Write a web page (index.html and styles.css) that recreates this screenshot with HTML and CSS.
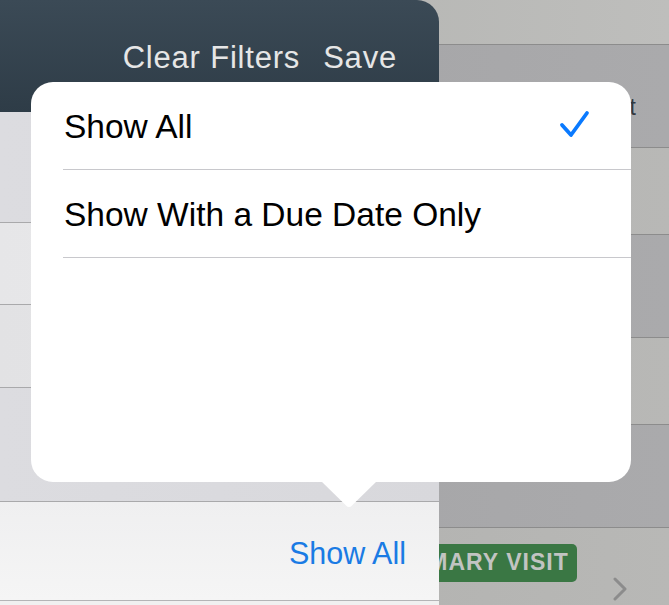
FILE: index.html
```html
<!DOCTYPE html>
<html lang="en">
<head>
    <meta charset="UTF-8">
    <meta name="viewport" content="width=device-width, initial-scale=1.0">
    <title>Filters</title>
    <link rel="stylesheet" href="styles.css">
</head>
<body>
    <div class="screen">
        <div class="bg-row bg-row-top"></div>
        <div class="bg-row bg-row-dark bg-row-sort"><span class="sort-label">Sort</span></div>
        <div class="bg-row bg-row-light r3"></div>
        <div class="bg-row bg-row-dark r4"></div>
        <div class="bg-row bg-row-light r5"></div>
        <div class="bg-row bg-row-dark r6"></div>
        <div class="bg-row bg-row-light bg-row-visit">
            <span class="badge">PRIMARY VISIT</span>
            <span class="chevron">
                <svg width="16" height="24" viewBox="0 0 16 24"><path d="M3 2 L13 12 L3 22" fill="none" stroke="#8c8c8c" stroke-width="3" stroke-linecap="round" stroke-linejoin="round"/></svg>
            </span>
        </div>
    </div>

    <div class="filter-panel">
        <header class="panel-header">
            <span class="header-btn">Clear Filters</span>
            <span class="header-btn">Save</span>
        </header>
        <div class="panel-row row-a"></div>
        <div class="panel-row row-b"></div>
        <div class="panel-row row-c"></div>
        <div class="panel-row row-d"></div>
        <div class="panel-toolbar">
            <span class="toolbar-value">Show All</span>
        </div>
        <div class="panel-rest"></div>
    </div>

    <div class="popover">
        <div class="option">
            <span>Show All</span>
            <svg class="check" width="32" height="30" viewBox="0 0 32 30"><path d="M3 15 L12 25 L28 3" fill="none" stroke="#0a7aff" stroke-width="3.8" stroke-linecap="round" stroke-linejoin="round"/></svg>
        </div>
        <div class="option">
            <span>Show With a Due Date Only</span>
        </div>
        <svg class="arrow" width="56" height="27" viewBox="0 0 56 27"><path d="M0 0 L56 0 L31 24.5 Q28 27.5 25 24.5 Z" fill="#fff"/></svg>
    </div>
</body>
</html>
```

FILE: styles.css
```css
body {
    margin: 0;
    padding: 0;
    font-family: 'Liberation Sans', Arial, sans-serif;
    background: #b5b5b3;
    width: 669px;
    height: 605px;
    overflow: hidden;
    position: relative;
}

/* dimmed screen behind the panel */
.screen {
    display: flex;
    flex-direction: column;
}

.bg-row {
    border-bottom: 1px solid #8c8c8c;
    display: flex;
    align-items: flex-start;
    justify-content: flex-end;
}

.bg-row-top {
    height: 44px;
    background: linear-gradient(to right, #aeafac, #bebebc);
}

.bg-row-dark {
    background: linear-gradient(to right, #a2a2a4, #aaaaac);
}

.bg-row-light {
    background: linear-gradient(to right, #adadab, #b8b8b6);
}

.bg-row-sort { height: 102px; }
.r3 { height: 86px; }
.r4 { height: 102px; }
.r5 { height: 86px; }
.r6 { height: 102px; }

.sort-label {
    font-size: 23px;
    color: #33383f;
    margin-top: 49px;
    margin-right: 33px;
}

.bg-row-visit {
    height: 80px;
    border-bottom: none;
    justify-content: flex-start;
}

.badge {
    margin-top: 16px;
    margin-left: 379px;
    background: #3a7744;
    color: #c2c4c2;
    font-weight: bold;
    font-size: 23px;
    letter-spacing: 1px;
    padding: 5px 8px 6px 8px;
    border-radius: 5px;
}

.chevron {
    margin-top: 49px;
    margin-left: 35px;
}

/* slide-over filter panel */
.filter-panel {
    position: absolute;
    left: 0;
    top: 0;
    width: 439px;
    height: 605px;
    display: flex;
    flex-direction: column;
}

.panel-header {
    height: 112px;
    background: linear-gradient(to bottom, #3b4a56, #2e3c47);
    border-top-right-radius: 22px;
    display: flex;
    justify-content: flex-end;
    align-items: flex-start;
    gap: 23px;
    padding-right: 42px;
}

.header-btn {
    color: #e6e6e6;
    font-size: 31px;
    letter-spacing: 0.8px;
    margin-top: 40px;
}

.panel-row {
    border-bottom: 1px solid #a9a9ab;
}

.row-a { height: 110px; background: linear-gradient(to right, #dcdce0, #d9d9dd); }
.row-b { height: 81px; background: linear-gradient(to right, #e6e6e8, #ececee); }
.row-c { height: 82px; background: linear-gradient(to right, #e2e2e4, #e8e8ea); }
.row-d { height: 113px; background: linear-gradient(to right, #dcdce0, #d8d8dc); }

.panel-toolbar {
    height: 98px;
    background: linear-gradient(to bottom, #efeff0, #f5f5f5);
    border-bottom: 1px solid #b4b4b6;
    display: flex;
    justify-content: flex-end;
    align-items: center;
    padding-right: 33px;
}

.toolbar-value {
    color: #1a7be4;
    font-size: 30.5px;
    margin-top: 4px;
}

.panel-rest {
    flex: 1;
    background: #f0f0f0;
}

/* options popover */
.popover {
    position: absolute;
    left: 31px;
    top: 82px;
    width: 600px;
    height: 400px;
    background: #fff;
    border-radius: 22px;
}

.option {
    height: 87px;
    margin-left: 32px;
    border-bottom: 1px solid #c8c8cc;
    display: flex;
    align-items: center;
    justify-content: space-between;
    padding-right: 40px;
    font-size: 33.5px;
    color: #000;
}

.option span {
    margin-left: 1px;
    margin-top: 3px;
}

.check {
    margin-top: -1px;
}

.arrow {
    position: absolute;
    left: 290px;
    top: 399px;
}
```
